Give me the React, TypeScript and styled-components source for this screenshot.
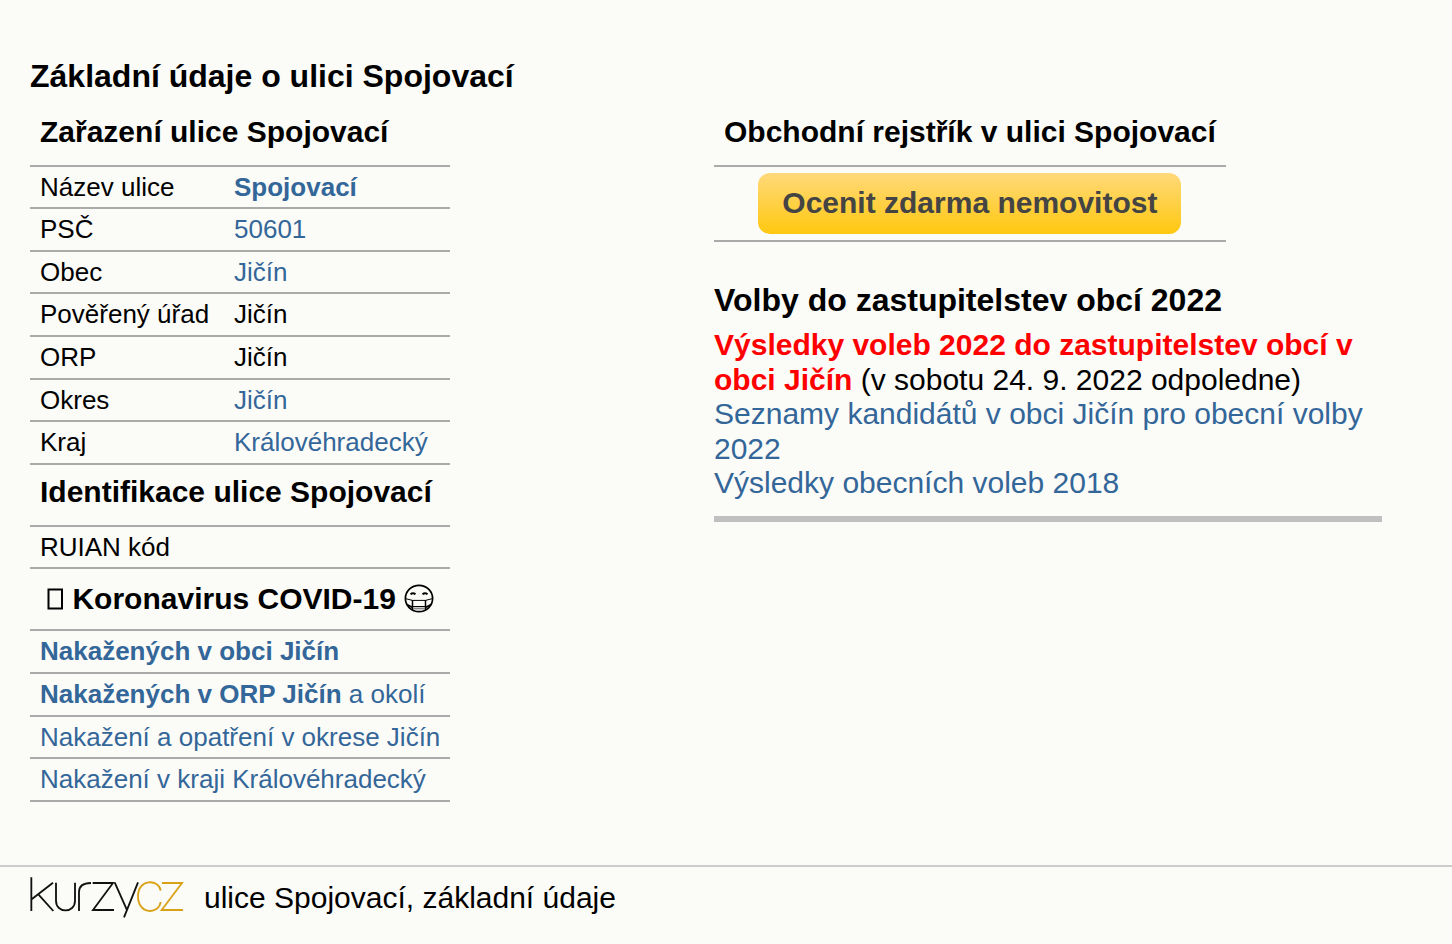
import React from "react";
import styled, { createGlobalStyle } from "styled-components";

const GlobalStyle = createGlobalStyle`
  * { box-sizing: border-box; }
  body {
    margin: 0;
    background: #fbfbf7;
    color: #000;
    font-family: "Liberation Sans", Arial, sans-serif;
    font-size: 30px;
  }
`;

const Page = styled.div`
  min-height: 100vh;
  display: flex;
  flex-direction: column;
`;

const Main = styled.main`
  flex: 1;
  padding: 56px 70px 62px 30px;
`;

const Title = styled.h1`
  margin: 0;
  font-size: 32px;
  line-height: 40px;
`;

const Columns = styled.div`
  display: grid;
  grid-template-columns: 1fr 1fr;
  gap: 16px;
  align-items: start;
`;

const DataTable = styled.table`
  justify-self: start;
  border-collapse: separate;
  border-spacing: 0;
  font-size: 26px;
  line-height: 30px;
`;

const Heading = styled.th<{ $first?: boolean; $center?: boolean }>`
  height: ${(p) => (p.$first ? 71 : 62)}px;
  padding: ${(p) => (p.$first ? "2px 10px 0" : p.$center ? "0 10px" : "0 10px 6px")};
  border-bottom: 2px solid #aaa;
  font-size: 30px;
  line-height: 34px;
  text-align: ${(p) => (p.$center ? "center" : "left")};
  white-space: nowrap;
`;

const Row = styled.tr<{ $short?: boolean }>`
  height: ${(p) => (p.$short ? 42 : 43)}px;
`;

const Cell = styled.td`
  padding: 5px 10px 0;
  border-bottom: 2px solid #aaa;
  vertical-align: top;
  white-space: nowrap;
  &:first-child:not(:last-child) { width: 194px; }
`;

const ButtonCell = styled.td`
  padding: 6px 0;
  border-bottom: 2px solid #aaa;
  text-align: center;
`;

const Link = styled.a<{ $alert?: boolean }>`
  color: ${(p) => (p.$alert ? "#f00" : "#336699")};
  font-weight: ${(p) => (p.$alert ? 700 : "inherit")};
  text-decoration: none;
`;

const Estimate = styled.button`
  display: block;
  margin: 0 auto;
  height: 61px;
  padding: 0 24px 2px;
  border: 0;
  border-radius: 12px;
  background: linear-gradient(#ffd97a, #ffc80f);
  color: #444;
  font: 700 30px/34px "Liberation Sans", Arial, sans-serif;
  cursor: pointer;
`;

const Elections = styled.section`
  margin-top: 38px;
  padding-bottom: 15px;
  border-bottom: 6px solid #c0c0c0;
`;

const SectionTitle = styled.h2`
  margin: 0 0 8px;
  font-size: 32px;
  line-height: 40px;
`;

const ElectionList = styled.ul`
  margin: 0;
  padding: 0;
  list-style: none;
  line-height: 1.15;
`;

const Footer = styled.footer`
  display: flex;
  align-items: flex-start;
  gap: 20px;
  height: 79px;
  padding: 10px 30px;
  border-top: 2px solid #ccc;
  line-height: 42px;
`;

const BoxGlyph = () => (
  <svg width="18" height="22" viewBox="0 0 18 22" aria-hidden="true">
    <path d="M2.5 1.5H16V20.5H2.5Z" fill="none" stroke="#000" strokeWidth="2" />
  </svg>
);

const MaskFace = () => (
  <svg width="30" height="29" viewBox="0 0 30 29" aria-hidden="true">
    <g fill="none" stroke="#000">
      <ellipse cx="15" cy="14.5" rx="13.6" ry="13.2" strokeWidth="1.7" />
      <path d="M6.5 10.3Q9 8.300 11.500 10.300M18.500 10.300Q21 8.300 23.500 10.300" strokeWidth="1.900" />
      <path d="M1.500 14.600 8.500 16.400H21.500L28.500 14.600" strokeWidth="1" />
      <path d="M8.500 16V26M21.500 16V26M3 20.500 8.500 23.500M27 20.500 21.500 23.500" strokeWidth="1.500" />
      <path d="M9 24.500H21" stroke="#888" strokeWidth="1.800" />
      <path d="M9 22.500H21" strokeWidth="1" />
    </g>
  </svg>
);

const CovidTitle = styled.span`
  display: inline-flex;
  align-items: center;
  gap: 8px;
`;

const Logo = () => (
  <svg width="154" height="41" viewBox="90 80 462 123" role="img" aria-label="kurzy.cz">
    <g fill="none" stroke="#111" strokeWidth="5.5">
      <path d="M94 81V182M159 97 95 147M115 132 160 182" />
      <path d="M168 97V151C168 190 225 190 225 151V97" />
      <path d="M237 182V126Q237 98 273 98" />
      <path d="M278 98H339L279 179H342" />
      <path d="M344 96 380 177M414 96 372 201" />
    </g>
    <g fill="none" stroke="#d9a116" strokeWidth="5.5">
      <path d="M482 121C477 86 414 84 414 138C414 194 477 193 482 155" />
      <path d="M486 98H546L485 179H549" />
    </g>
  </svg>
);

type Place = { label: string; value: string; link?: boolean; bold?: boolean; short?: boolean };

const location: Place[] = [
  { label: "Název ulice", value: "Spojovací", link: true, bold: true, short: true },
  { label: "PSČ", value: "50601", link: true },
  { label: "Obec", value: "Jičín", link: true, short: true },
  { label: "Pověřený úřad", value: "Jičín" },
  { label: "ORP", value: "Jičín" },
  { label: "Okres", value: "Jičín", link: true, short: true },
  { label: "Kraj", value: "Královéhradecký", link: true },
];

export default function App() {
  return (
    <Page>
      <GlobalStyle />
      <Main>
        <Title>Základní údaje o ulici Spojovací</Title>
        <Columns>
          <DataTable>
            <tbody>
              <tr><Heading colSpan={2} $first>Zařazení ulice Spojovací</Heading></tr>
              {location.map((r) => (
                <Row key={r.label} $short={r.short}>
                  <Cell>{r.label}</Cell>
                  <Cell>
                    {r.link ? <Link href="#">{r.bold ? <b>{r.value}</b> : r.value}</Link> : r.value}
                  </Cell>
                </Row>
              ))}
            </tbody>
            <tbody>
              <tr><Heading colSpan={2}>Identifikace ulice Spojovací</Heading></tr>
              <Row $short><Cell>RUIAN kód</Cell><Cell /></Row>
            </tbody>
            <tbody>
              <tr>
                <Heading colSpan={2} $center>
                  <CovidTitle><BoxGlyph />Koronavirus COVID-19<MaskFace /></CovidTitle>
                </Heading>
              </tr>
              <Row><Cell colSpan={2}><Link href="#"><b>Nakažených v obci Jičín</b></Link></Cell></Row>
              <Row><Cell colSpan={2}><Link href="#"><b>Nakažených v ORP Jičín</b> a okolí</Link></Cell></Row>
              <Row $short><Cell colSpan={2}><Link href="#">Nakažení a opatření v okrese Jičín</Link></Cell></Row>
              <Row><Cell colSpan={2}><Link href="#">Nakažení v kraji Královéhradecký</Link></Cell></Row>
            </tbody>
          </DataTable>
          <div>
            <DataTable>
              <tbody>
                <tr><Heading $first>Obchodní rejstřík v ulici Spojovací</Heading></tr>
                <tr><ButtonCell><Estimate type="button">Ocenit zdarma nemovitost</Estimate></ButtonCell></tr>
              </tbody>
            </DataTable>
            <Elections>
              <SectionTitle>Volby do zastupitelstev obcí 2022</SectionTitle>
              <ElectionList>
                <li><Link href="#" $alert>Výsledky voleb 2022 do zastupitelstev obcí v obci Jičín</Link> (v sobotu 24. 9. 2022 odpoledne)</li>
                <li><Link href="#">Seznamy kandidátů v obci Jičín pro obecní volby 2022</Link></li>
                <li><Link href="#">Výsledky obecních voleb 2018</Link></li>
              </ElectionList>
            </Elections>
          </div>
        </Columns>
      </Main>
      <Footer>
        <Logo />
        <span>ulice Spojovací, základní údaje</span>
      </Footer>
    </Page>
  );
}
